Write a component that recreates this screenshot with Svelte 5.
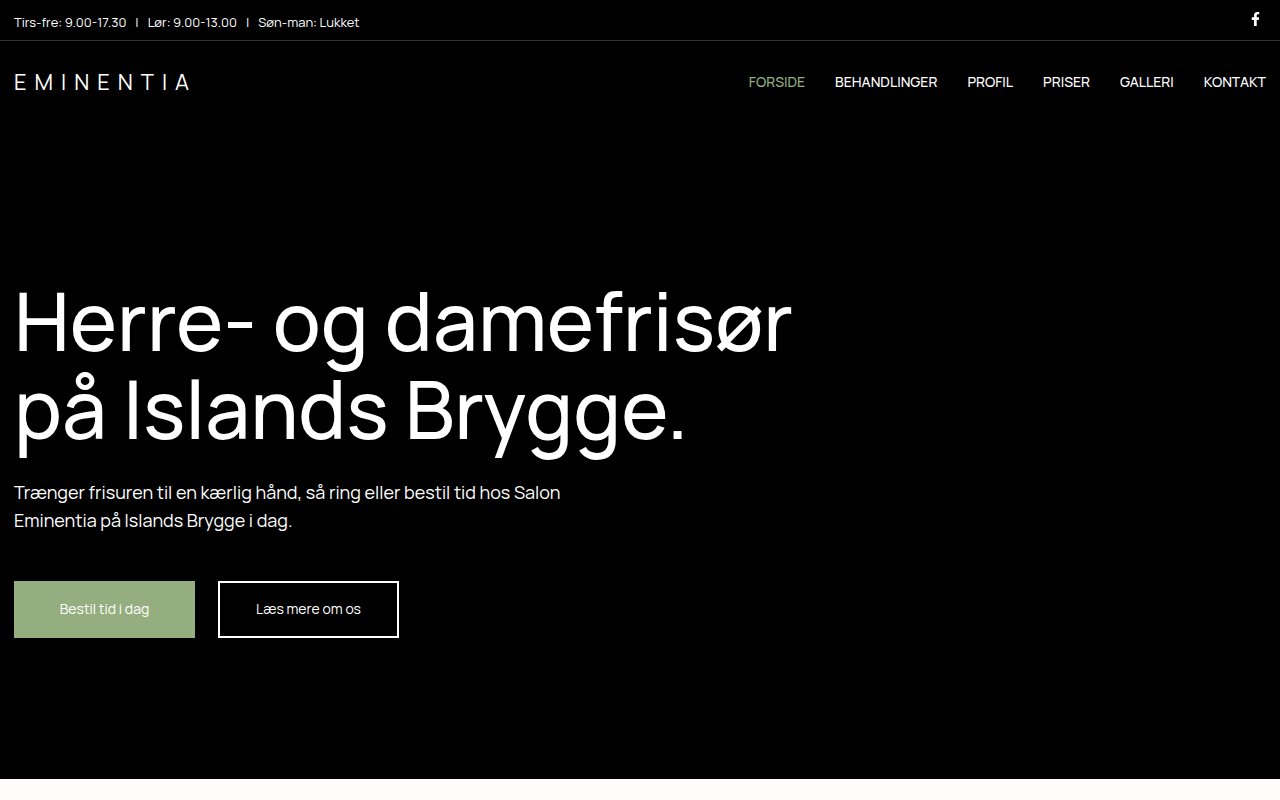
<!--
	SALON FRONT PAGE
	Opening hours bar, main navigation and hero
-->
<script lang="ts">
	const openingHours = ['Tirs-fre: 9.00-17.30', 'Lør: 9.00-13.00', 'Søn-man: Lukket'];

	const menu = [
		{ label: 'Forside', href: '#forside' },
		{ label: 'Behandlinger', href: '#behandlinger' },
		{ label: 'Profil', href: '#profil' },
		{ label: 'Priser', href: '#priser' },
		{ label: 'Galleri', href: '#galleri' },
		{ label: 'Kontakt', href: '#kontakt' }
	];

	let current = $state('#forside');
</script>

<div class="page">
	<div class="topbar">
		<div class="hours">
			{#each openingHours as entry, i}
				{#if i > 0}<span class="divider">|</span>{/if}
				<span>{entry}</span>
			{/each}
		</div>
		<a class="facebook" href="#facebook" aria-label="Facebook">
			<svg viewBox="0 0 320 512" aria-hidden="true">
				<path
					fill="currentColor"
					d="M279.14 288l14.22-92.66h-88.91v-60.13c0-25.35 12.42-50.06 52.24-50.06h40.42V6.26S260.43 0 225.36 0c-73.22 0-121.08 44.38-121.08 124.72v70.62H22.89V288h81.39v224h100.17V288z"
				/>
			</svg>
		</a>
	</div>

	<header class="header">
		<a class="logo" href="#forside">EMINENTIA</a>
		<nav>
			{#each menu as item}
				<a
					href={item.href}
					class:active={current === item.href}
					onclick={() => (current = item.href)}>{item.label}</a
				>
			{/each}
		</nav>
	</header>

	<main class="hero">
		<h1>Herre- og damefrisør<br />på Islands Brygge.</h1>
		<p>Trænger frisuren til en kærlig hånd, så ring eller bestil tid hos Salon Eminentia på Islands Brygge i dag.</p>
		<div class="actions">
			<a class="button primary" href="#bestil">Bestil tid i dag</a>
			<a class="button outline" href="#profil">Læs mere om os</a>
		</div>
	</main>
</div>

<style>
	:global(body) {
		background: #fffbfa;
	}

	.page {
		background: #000;
		color: #fff;
		font-family: Manrope, Inter, 'Liberation Sans', sans-serif;
	}

	a {
		color: inherit;
		text-decoration: none;
	}

	/* === TOP BAR === */
	.topbar {
		display: flex;
		align-items: center;
		justify-content: space-between;
		height: 40px;
		padding: 0 14px;
		border-bottom: 1px solid #333;
	}

	.hours {
		display: flex;
		gap: 9px;
		padding-top: 4px;
		font-size: 13px;
		line-height: 20px;
	}

	.facebook {
		display: flex;
		padding: 0 6px 2px;
	}

	.facebook svg {
		width: 9px;
		height: 14px;
	}

	/* === HEADER === */
	.header {
		display: flex;
		align-items: center;
		justify-content: space-between;
		height: 82px;
		padding: 0 14px;
	}

	.logo {
		font-size: 22px;
		font-weight: 400;
		letter-spacing: 8px;
	}

	nav {
		display: flex;
		gap: 30px;
		font-size: 14px;
		font-weight: 500;
		line-height: 20px;
		text-transform: uppercase;
	}

	nav .active {
		color: #94ae80;
	}

	/* === HERO === */
	.hero {
		padding: 154px 14px 141px;
	}

	h1 {
		margin: 0;
		font-size: 80px;
		font-weight: 500;
		line-height: 88px;
	}

	.hero p {
		max-width: 600px;
		margin: 25px 0 47px;
		font-size: 18px;
		line-height: 28px;
	}

	.actions {
		display: flex;
		flex-wrap: wrap;
		gap: 23px;
	}

	.button {
		box-sizing: border-box;
		min-width: 181px;
		padding: 15px 20px 17px;
		border: 2px solid #fff;
		font-size: 14px;
		line-height: 21px;
		text-align: center;
	}

	.primary {
		border-color: #94ae80;
		background: #94ae80;
	}
</style>
